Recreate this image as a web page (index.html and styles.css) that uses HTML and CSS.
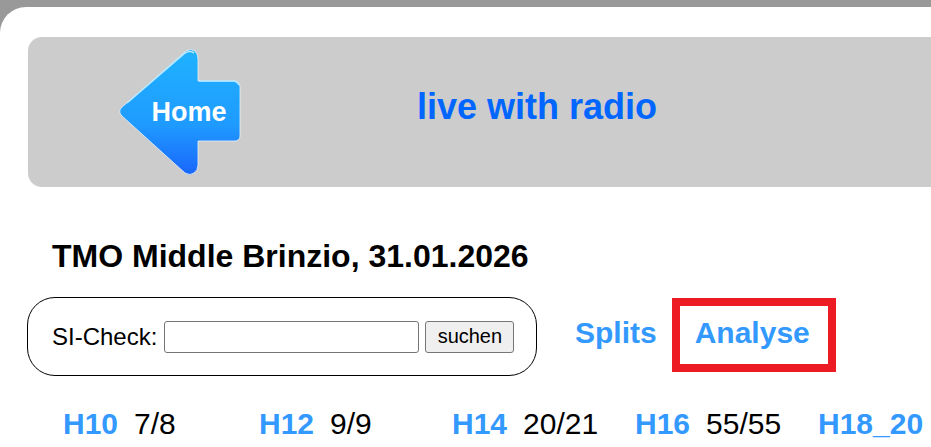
FILE: index.html
```html
<!DOCTYPE html>
<html lang="en">
<head>
    <meta charset="UTF-8">
    <meta name="viewport" content="width=device-width, initial-scale=1.0">
    <title>TMO Middle Brinzio</title>
    <link rel="stylesheet" href="styles.css">
</head>
<body>
    <div class="container">
        <div class="header">
            <a class="home-link" href="#">
                <svg class="home-arrow" width="122" height="128" viewBox="0 0 122 128">
                    <defs>
                        <linearGradient id="arrow-fill" x1="0" y1="0" x2="0" y2="1">
                            <stop offset="0" stop-color="#1fb2ff"/>
                            <stop offset="0.6" stop-color="#1f9bff"/>
                            <stop offset="1" stop-color="#1a66fb"/>
                        </linearGradient>
                    </defs>
                    <path d="M2 60 L67 3 Q72 0 76 3 Q79 6 79 11 L79 33 L114 33 Q121 33 121 39 L121 88 Q121 93 115 93 L79 93 L79 117 Q79 122 75 125 Q71 128 66 125 L3 68 Q-1 64 2 60 Z" fill="url(#arrow-fill)" stroke="#e6f2fb" stroke-width="0.8"/>
                    <path d="M8 55 L66 5 Q71 2 75 5" fill="none" stroke="#b8e8ff" stroke-width="1.6"/>
                    <path d="M80 33 L114 33 Q118 33 120 37" fill="none" stroke="#b8e8ff" stroke-width="1.6"/>
                    <text class="home-label" x="70" y="73" text-anchor="middle">Home</text>
                </svg>
            </a>
            <a class="live-link" href="#">live with radio</a>
        </div>

        <h1 class="event-title">TMO Middle Brinzio, 31.01.2026</h1>

        <div class="tools">
            <form class="si-check">
                <label for="si-number">SI-Check:</label>
                <input type="text" id="si-number">
                <button type="button">suchen</button>
            </form>
            <a class="tool-link" href="#">Splits</a>
            <a class="tool-link tool-active" href="#">Analyse</a>
        </div>

        <div class="classes">
            <div class="class-item"><a href="#">H10</a><span>7/8</span></div>
            <div class="class-item"><a href="#">H12</a><span>9/9</span></div>
            <div class="class-item"><a href="#">H14</a><span>20/21</span></div>
            <div class="class-item"><a href="#">H16</a><span>55/55</span></div>
            <div class="class-item"><a href="#">H18_20</a></div>
        </div>
    </div>
</body>
</html>
```

FILE: styles.css
```css
html, body {
    height: 100%;
    overflow: hidden;
}
body {
    font-family: "Liberation Sans", Arial, sans-serif;
    margin: 0;
    padding-top: 7px;
    background-color: #999;
    box-sizing: border-box;
}
a {
    text-decoration: none;
}
.container {
    background-color: white;
    border-top-left-radius: 26px;
    height: 100%;
    padding: 30px 0 0 28px;
    box-sizing: border-box;
}
.header {
    height: 150px;
    background-color: #ccc;
    border-radius: 14px 0 0 14px;
    display: flex;
    align-items: center;
}
.home-link {
    display: block;
    margin-left: 91px;
    height: 128px;
}
.home-arrow {
    display: block;
}
.home-label {
    font-family: "Liberation Sans", Arial, sans-serif;
    font-size: 27px;
    font-weight: bold;
    fill: white;
}
.live-link {
    margin-left: 176px;
    margin-bottom: 10px;
    font-size: 36px;
    font-weight: bold;
    color: #0066ff;
}
.event-title {
    margin: 52px 0 0 24px;
    font-size: 32px;
    line-height: 34px;
    font-weight: bold;
    color: black;
}
.tools {
    display: flex;
    align-items: flex-start;
    margin-top: 24px;
}
.si-check {
    width: 510px;
    height: 79px;
    box-sizing: border-box;
    margin-left: -1px;
    border: 1px solid black;
    border-radius: 28px;
    padding: 0 0 0 24px;
    display: flex;
    align-items: center;
    font-size: 24px;
}
.si-check input {
    width: 255px;
    height: 32px;
    box-sizing: border-box;
    margin-left: 7px;
    border: 1px solid #767676;
    border-radius: 3px;
}
.si-check button {
    width: 89px;
    height: 32px;
    margin-left: 6px;
    padding: 0;
    font-family: "Liberation Sans", Arial, sans-serif;
    font-size: 20px;
    color: black;
    background-color: #efefef;
    border: 1px solid #767676;
    border-radius: 3px;
}
.tool-link {
    font-size: 30px;
    line-height: 34px;
    margin-top: 19px;
    font-weight: bold;
    color: #3399ff;
}
.si-check + .tool-link {
    margin-left: 38px;
}
.tool-active {
    margin-top: 1px;
    margin-left: 15px;
    width: 164px;
    height: 74px;
    box-sizing: border-box;
    border: 8px solid #ed1c24;
    padding-left: 15px;
    line-height: 53px;
}
.classes {
    display: grid;
    grid-template-columns: 196px 193px 183px 183px 1fr;
    margin: 31px 0 0 35px;
    font-size: 30px;
    line-height: 34px;
}
.class-item {
    white-space: nowrap;
}
.class-item a {
    font-weight: bold;
    color: #3399ff;
    margin-right: 16px;
}
```
